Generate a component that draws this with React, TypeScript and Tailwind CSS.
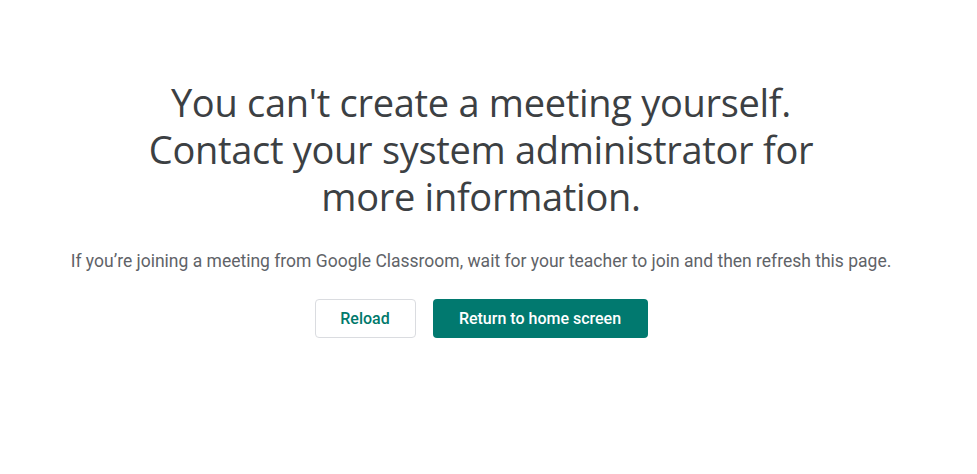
import React from 'react';

export default function App() {
  return (
    <div className="min-h-screen w-full bg-white pr-[15px]">
      <div className="flex flex-col items-center pt-[79px]">
        <h1 className="text-center text-[38px] leading-[47px] text-[#3c4043] font-normal font-['Open_Sans',sans-serif] tracking-[-0.3px]">
          You can't create a meeting yourself.
          <br />
          Contact your system administrator for
          <br />
          more information.
        </h1>

        <p className="mt-[29px] text-center text-[17.5px] leading-6 text-[#5f6368] font-['Roboto',sans-serif]">
          If you’re joining a meeting from Google Classroom, wait for your teacher to join and then refresh this page.
        </p>

        <div className="mt-[26px] flex items-center gap-[17px]">
          <button className="h-[39px] w-[101px] rounded border border-[#dadce0] bg-white text-[16px] font-medium text-[#00796b] font-['Roboto',sans-serif]">
            Reload
          </button>
          <button className="h-[39px] w-[215px] rounded bg-[#01796f] text-[16px] font-medium text-white font-['Roboto',sans-serif]">
            Return to home screen
          </button>
        </div>
      </div>
    </div>
  );
}
